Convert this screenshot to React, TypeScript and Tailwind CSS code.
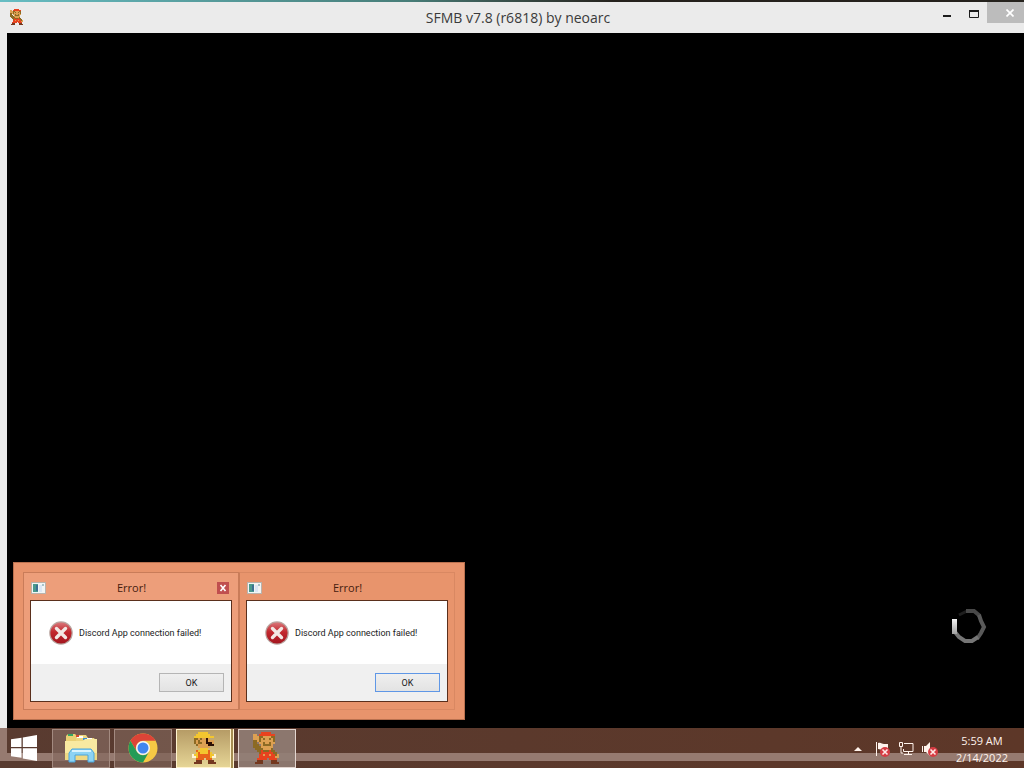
import React from "react"

const PALETTE: Record<string, string> = {
  R: '#e8421f',
  T: '#dda052',
  B: '#8c6a24',
  D: '#74381f',
  Y: '#f3c62f',
  O: '#e8641b',
  K: '#2b1006',
  W: '#fff4d8'
}

const WAVING = [
  '....RRRRR.....',
  'TT.RRRRRRRR...',
  'TTTBBTTTTBB...',
  'TTTBTBTTBTB...',
  'BBTBTTTTTTB...',
  'BB.TTBTTBTT...',
  'BBB.TBBBBT....',
  'BBBBTTTTTT....',
  '.BBBBTTTTB....',
  '..BBRBBBRBB...',
  '...BRRRRRRBB..',
  '...RRTRRTRRBT.',
  '...RRRRRRRRTT.',
  '..RRRRR.RRRR..',
  '..DDD....DDD..',
  '.DDDD....DDDD.'
]

const BUILDER = [
  '...YYYYY....',
  '..YYYYYYY...',
  '.YYYYYYYYYY.',
  '.BBTBTTKT...',
  '.BTBTTTKTTT.',
  '.BTBBTTKKKT.',
  '..BTTTTTKKK.',
  '...TTTTTT...',
  '....YYYY....',
  '..OYYYYYO...',
  '..YOYYYYOY..',
  'WYYOOOOOOYYW',
  'WWYOOOOOOYWW',
  '..OOOO.OOO..',
  '..DDD...DDD.',
  '.DDDD...DDDD'
]

interface SpriteProps {
  rows: string[]
  className: string
}

const Sprite: React.FC<SpriteProps> = ({ rows, className }) => (
  <svg viewBox={`0 0 ${rows[0].length} ${rows.length}`} className={className} shapeRendering="crispEdges" aria-hidden="true">
    {rows.map((row, y) =>
      row.split('').map((c, x) =>
        c === '.' ? null : <rect key={`${x}-${y}`} x={x} y={y} width={1} height={1} fill={PALETTE[c]} />
      )
    )}
  </svg>
)

const ErrorIcon = () => (
  <svg viewBox="0 0 24 24" className="h-6 w-6 shrink-0" aria-hidden="true">
    <defs>
      <linearGradient id="err" x1="0" y1="0" x2="0" y2="1">
        <stop offset="0" stopColor="#d9777a" />
        <stop offset="0.45" stopColor="#c2272d" />
        <stop offset="1" stopColor="#a3161f" />
      </linearGradient>
    </defs>
    <circle cx="12" cy="12" r="11.8" fill="#b9a5a0" />
    <circle cx="12" cy="12" r="10.6" fill="url(#err)" />
    <path d="M7.5 7.5l9 9M16.5 7.5l-9 9" stroke="#f3e8e4" strokeWidth="3.4" strokeLinecap="round" />
  </svg>
)

const AppIcon = () => (
  <svg viewBox="0 0 15 12" className="h-3 w-[15px]" aria-hidden="true">
    <rect x="0.5" y="0.5" width="14" height="11" fill="#f2f5f5" stroke="#b9b3ac" />
    <rect x="2" y="2" width="5" height="8" fill="#4a9a8d" />
    <rect x="5" y="3" width="2" height="6" fill="#3d6f92" />
    <rect x="8" y="3" width="3" height="7" fill="#dbe7f5" />
    <rect x="11" y="2" width="2" height="2" fill="#a9c3c9" />
  </svg>
)

interface ErrorPreviewProps {
  active?: boolean
}

const ErrorPreview: React.FC<ErrorPreviewProps> = ({ active = false }) => (
  <section
    className={`flex flex-1 flex-col border px-1.5 pb-[7px] ${
      active ? 'border-[#c97c59] bg-[#ed9e7a]' : 'border-[#d98862] border-l-[#c97c59] bg-[#e8946c]'
    }`}
  >
    <header className="flex h-[27px] items-center pt-0.5 pr-[3px] pl-px">
      <AppIcon />
      <h2 className="flex-1 text-center text-[11px] leading-4 text-[#46200f]">Error!</h2>
      {active ? (
        <button aria-label="Close" className="flex h-3 w-3 items-center justify-center bg-[#c04f4f]">
          <svg viewBox="0 0 8 8" className="h-2 w-2">
            <path d="M1.5 1l5 6M6.5 1l-5 6" stroke="#fff" strokeWidth="1.6" />
          </svg>
        </button>
      ) : (
        <span className="w-3" />
      )}
    </header>
    <div className="flex flex-1 flex-col border border-[#5a2f1c] bg-white font-['Roboto',sans-serif] text-[9px] leading-3 text-[#222]">
      <div className="flex flex-1 items-center gap-1.5 pl-[18px]">
        <ErrorIcon />
        <p className="whitespace-nowrap">Discord App connection failed!</p>
      </div>
      <div className="flex h-[37px] items-center justify-end bg-[#f0f0f0] pr-[7px]">
        <button
          className={`h-[19px] w-[65px] border bg-linear-to-b from-[#efefef] to-[#e3e3e3] ${
            active ? 'border-[#b5b5b5]' : 'border-[#5f97e6]'
          }`}
        >
          OK
        </button>
      </div>
    </div>
  </section>
)

const StartIcon = () => (
  <svg viewBox="0 0 26 26" className="h-[26px] w-[26px]" fill="#fff" aria-hidden="true">
    <path d="M0 4.3l10.5-1.6V12H0zM11.8 2.5L26 0v12H11.8zM0 13.3h10.5v9.5L0 21.2zM11.8 13.3H26V26l-14.2-2.6z" />
  </svg>
)

const FolderIcon = () => (
  <svg viewBox="0 0 34 30" className="h-[30px] w-[34px]" aria-hidden="true">
    <path d="M2 3l2-2h7l2 2h6v24H2z" fill="#e9cf73" />
    <path d="M12 4l2-2h8l2 3h6l2 3v19H12z" fill="#ecd680" />
    <rect x="4" y="1" width="5" height="2" fill="#35a464" />
    <rect x="13" y="3" width="6" height="2" fill="#fff" />
    <rect x="12" y="2" width="3" height="2" fill="#d84730" />
    <rect x="19" y="5" width="9" height="2" fill="#fff" />
    <rect x="19" y="5" width="4" height="2" fill="#3b8fd1" />
    <path d="M1 8h18l2-2h12v21H1z" fill="#f8e9a1" />
    <path d="M1 20h32v7H1z" fill="#efd983" />
    <path d="M5 29V20l3-4h19l3 4v9h-6v-7H11v7z" fill="#8cd3f4" stroke="#4aa5dc" />
    <path d="M8 18h19" stroke="#d9f3fd" strokeWidth="2" />
  </svg>
)

const ChromeIcon = () => (
  <svg viewBox="0 0 30 30" className="h-[30px] w-[30px]" aria-hidden="true">
    <circle cx="15" cy="15" r="14.5" fill="#f6c945" />
    <path d="M2.4 7.8A14.5 14.5 0 0 1 27.6 7.8H15A7.2 7.2 0 0 0 8.8 18.6z" fill="#dc4437" />
    <path d="M2.4 7.8A14.5 14.5 0 0 0 15 29.5L21.2 18.6A7.2 7.2 0 0 1 8.8 18.6z" fill="#249b57" />
    <circle cx="15" cy="15" r="7" fill="#f5f5f5" />
    <circle cx="15" cy="15" r="5.5" fill="#4286ee" />
  </svg>
)

const Badge = () => (
  <>
    <circle cx="11" cy="11" r="5" fill="#d63c43" />
    <path d="M8.5 8.5l5 5M13.5 8.5l-5 5" stroke="#ffe9e6" strokeWidth="1.6" />
  </>
)

const Spinner = () => (
  <svg viewBox="0 0 38 38" className="h-[38px] w-[38px]" fill="none" role="status" aria-label="Loading">
    <defs>
      <linearGradient id="tail" x1="0" y1="0" x2="0" y2="1">
        <stop offset="0" stopColor="#f4f4f4" />
        <stop offset="1" stopColor="#a0a0a0" />
      </linearGradient>
    </defs>
    <path d="M9 7l8-4" stroke="#1e1e1e" strokeWidth="3" />
    <path d="M16 3h8l6 5" stroke="#484848" strokeWidth="4" />
    <path d="M29 7l2 6 3 6-3 6-4 6" stroke="#5a5a5a" strokeWidth="4" />
    <path d="M28 29l-6 4h-7l-6-4-4-5" stroke="#757575" strokeWidth="4" />
    <rect x="2" y="11" width="5" height="15" fill="url(#tail)" />
  </svg>
)

const TASK = 'flex h-[39px] w-[58px] items-center justify-center border'

export default function App() {
  return (
    <div className="relative flex h-screen flex-col overflow-hidden bg-black font-['Open_Sans','Noto_Sans',sans-serif]">
      <div className="h-0.5 shrink-0 bg-linear-to-r from-[#67bdc3] via-[#477d78] via-40% to-[#25221d] to-60%" />
      <header className="grid h-[31px] shrink-0 grid-cols-[1fr_auto_1fr] items-start bg-[#ebebeb]">
        <Sprite rows={WAVING} className="mt-[7px] ml-[10px] h-4 w-3.5" />
        <h1 className="pt-1.5 pl-3 text-sm leading-5 text-[#3a3a3a]">SFMB v7.8 (r6818) by neoarc</h1>
        <div className="flex items-start justify-end">
          <button aria-label="Minimize" className="flex h-[23px] w-[27px] items-center justify-center">
            <svg viewBox="0 0 10 10" className="h-2.5 w-2.5">
              <path d="M1 7h8" stroke="#1c1c1c" strokeWidth="2" />
            </svg>
          </button>
          <button aria-label="Maximize" className="flex h-[23px] w-[27px] items-center justify-center">
            <svg viewBox="0 0 10 8" className="h-2 w-2.5" fill="none">
              <path d="M0.5 1v6.5h9V1" stroke="#1c1c1c" />
              <path d="M0 1h10" stroke="#1c1c1c" strokeWidth="2" />
            </svg>
          </button>
          <button aria-label="Close" className="flex h-[21px] w-[37px] items-center justify-center bg-[#bcbcbc] pl-2">
            <svg viewBox="0 0 8 8" className="h-2 w-2">
              <path d="M0.5 0.5l7 7M7.5 0.5l-7 7" stroke="#fff" strokeWidth="1.7" />
            </svg>
          </button>
        </div>
      </header>

      <main className="flex flex-1 items-end justify-end border-l-[7px] border-[#ebebeb] bg-black pr-9 pb-[82px]">
        <Spinner />
      </main>

      {/* taskbar thumbnails */}
      <div className="absolute bottom-12 left-[13px] flex h-[158px] w-[452px] border border-[#b9714f] bg-[#e8946c] p-[9px]">
        <ErrorPreview active />
        <ErrorPreview />
      </div>

      <footer className="relative flex h-10 shrink-0 items-center bg-linear-to-r from-[#593b30] to-[#5d3728]">
        {/* edge of the window showing through the glass */}
        <div className="absolute inset-x-0 top-0 bottom-[7px] border-b-8 border-l-[7px] border-[#967a70]" />
        <nav className="relative flex flex-1 items-center">
          <button aria-label="Start" className="mr-[5px] flex w-[47px] items-center justify-center">
            <StartIcon />
          </button>
          <div className="flex gap-1">
            <button aria-label="File Explorer" className={`${TASK} border-[#a38a80] bg-[#846a5f]/70`}>
              <FolderIcon />
            </button>
            <button aria-label="Google Chrome" className={`${TASK} border-[#a38a80] bg-[#7d6257]/70`}>
              <ChromeIcon />
            </button>
            <div className="flex">
              <button
                aria-label="Super Mario Builder"
                className="flex h-[39px] w-[55px] items-center justify-center border border-[#fff3cf] bg-linear-to-b from-[#b69c66] to-[#e6d596]"
              >
                <Sprite rows={BUILDER} className="h-8 w-6" />
              </button>
              <span className="h-[39px] w-[3px] border-r border-[#fff3cf] bg-[#a48c52]" />
            </div>
            <button aria-label="SFMB" className={`${TASK} border-[#e3d5cf] bg-[#917e75]/90`}>
              <Sprite rows={WAVING} className="h-8 w-7" />
            </button>
          </div>
        </nav>
        <div className="relative flex items-center">
          <div className="flex items-center pt-0.5">
            <button aria-label="Show hidden icons" className="mr-3">
              <svg viewBox="0 0 8 4" className="h-1 w-2" fill="#fff3ec">
                <path d="M0 4l4-4 4 4z" />
              </svg>
            </button>
            <button aria-label="Action Center" className="mr-2">
              <svg viewBox="0 0 16 16" className="h-4 w-4">
                <path d="M2.5 1v14" stroke="#fff3ec" />
                <path d="M4 2c3-1 4 1 6 1h4v6H9L4 8z" fill="#fff3ec" />
                <Badge />
              </svg>
            </button>
            <button aria-label="Network" className="mr-2">
              <svg viewBox="0 0 16 16" className="h-4 w-4" fill="none" stroke="#fff3ec">
                <path d="M6 2.5h9v8H5.5V8M10.5 10.5v3M6 13.5h8" />
                <path d="M1.5 1.5h3v4h-3zM3 5.5v6.5h2" />
              </svg>
            </button>
            <button aria-label="Volume" className="mr-[18px]">
              <svg viewBox="0 0 16 16" className="h-4 w-4">
                <path d="M0.5 5v6" stroke="#fff3ec" />
                <path d="M2 5h2l4-4v14l-4-4H2z" fill="#fff3ec" />
                <Badge />
              </svg>
            </button>
          </div>
          <div className="mr-4 pt-0.5 text-center text-[11px] leading-[17px] text-[#fff3ec]">
            <p>5:59 AM</p>
            <p>2/14/2022</p>
          </div>
        </div>
      </footer>
    </div>
  )
}
